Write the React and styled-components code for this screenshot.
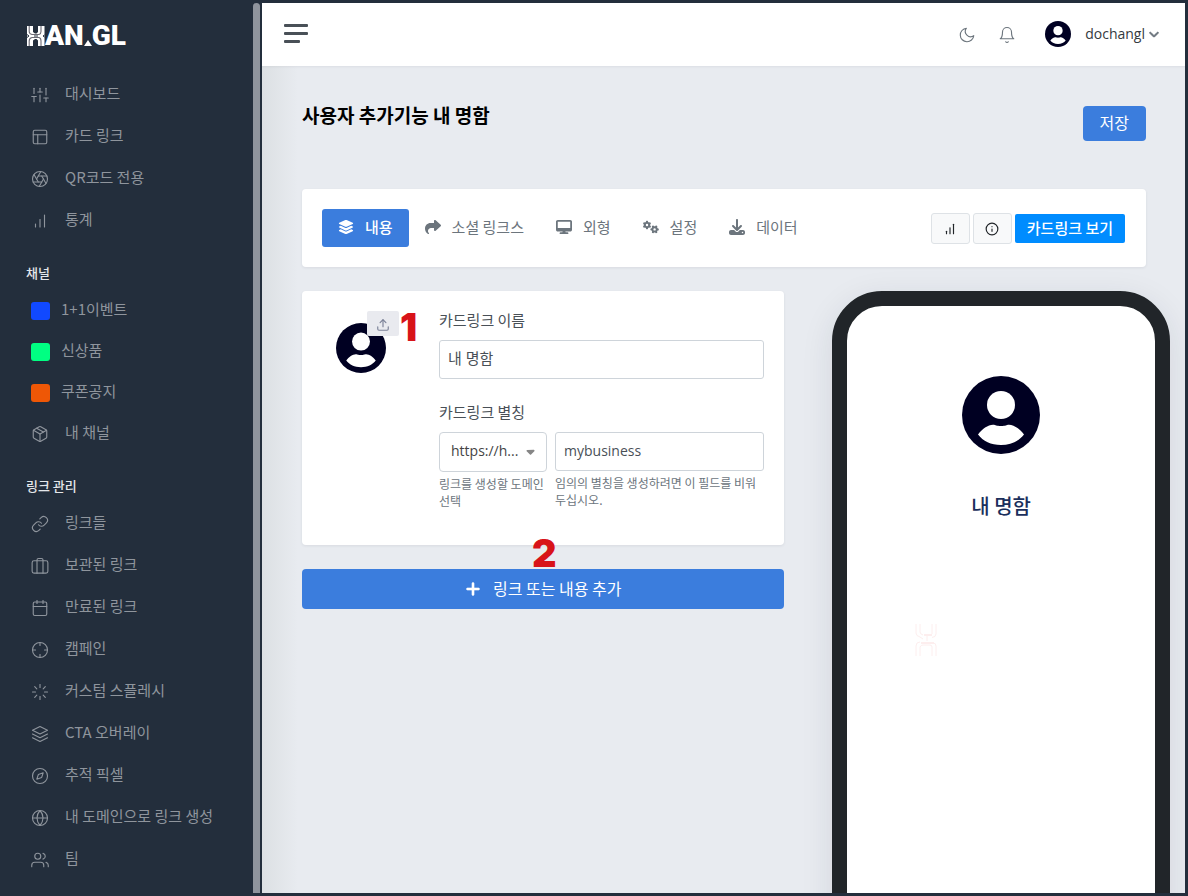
import { useState } from "react";
import styled, { createGlobalStyle } from "styled-components";
import {
    FiSliders, FiLayout, FiAperture, FiBarChart, FiPackage, FiLink, FiCalendar,
    FiCrosshair, FiLoader, FiLayers, FiCompass, FiGlobe, FiUsers, FiMoon, FiBell,
    FiInfo, FiUpload,
} from "react-icons/fi";
import {
    FaLayerGroup, FaShare, FaDesktop, FaGears, FaDownload, FaPlus, FaChevronDown, FaCaretDown,
} from "react-icons/fa6";

const GlobalStyle = createGlobalStyle`
    * {
        box-sizing : border-box;
    }
    body {
        margin : 0;
        background-color : #232e3c;
        color : #495057;
        font-family : "Noto Sans CJK KR", "Noto Sans", sans-serif;
        font-size : 15px;
    }
    button, input, select {
        font-family : inherit;
        font-size : 15px;
    }
    button {
        cursor : pointer;
    }
    h1, h2, h3, p, ul {
        margin : 0;
        padding : 0;
    }
    a {
        text-decoration : none;
    }
`;

const Frame = styled.div`
    display : flex;
    height : 100vh;
    padding : 3px 3px 3px 0;
    background-color : #232e3c;
`;

/* 사이드바 */
const Sidebar = styled.aside`
    display : flex;
    flex : none;
    width : 262px;
`;

const SidebarBody = styled.div`
    flex : 1;
    min-width : 0;
    overflow : hidden;
`;

const ScrollThumb = styled.div`
    width : 7px;
    margin-right : 2px;
    border-radius : 4px 4px 0 0;
    background-color : #8f949d;
`;

const Logo = styled.a`
    display : flex;
    align-items : center;
    height : 20px;
    margin : 23px 0 27px 27px;
    color : white;
    font-family : Roboto, "Liberation Sans", sans-serif;
    font-size : 28px;
    font-weight : 900;
    line-height : 20px;
`;

const LogoDot = styled.span`
    align-self : flex-end;
    border : 4px solid transparent;
    border-top : 0;
    border-bottom : 6px solid white;
`;

const NavTitle = styled.h2`
    padding : 22px 0 6px 26px;
    color : #e4e7ea;
    font-size : 13px;
    font-weight : 500;
    line-height : 20px;
`;

const NavList = styled.ul`
    list-style : none;
`;

const NavLink = styled.a`
    display : flex;
    align-items : center;
    gap : ${(props) => (props.$tag ? "11px" : "16px")};
    height : ${(props) => (props.$tag ? "41px" : "42px")};
    padding : 0 0 2px 31px;
    color : #8f959d;
    line-height : 20px;

    svg {
        width : 18px;
        height : 18px;
        margin-top : 3px;
        stroke-width : 1.5;
    }
`;

const Swatch = styled.span`
    width : 19px;
    height : 18px;
    margin-top : 5px;
    border-radius : 3px;
    background-color : ${(props) => props.$color};
`;

/* 본문 */
const Main = styled.main`
    flex : 1;
    min-width : 0;
    overflow-y : auto;
    scrollbar-width : none;
    background : linear-gradient(90deg, #dce0e3, #e8ebf0 36px);
`;

const TopBar = styled.header`
    display : flex;
    align-items : center;
    justify-content : space-between;
    height : 63px;
    padding : 0 26px 2px 22px;
    background-color : white;
    box-shadow : 0 1px 2px rgba(30,40,50,0.06);
`;

const MenuButton = styled.button`
    display : flex;
    flex-direction : column;
    gap : 5px;
    padding : 0;
    border : 0;
    background : none;
`;

const MenuBar = styled.span`
    width : ${(props) => (props.$short ? "16px" : "24px")};
    height : 3px;
    border-radius : 1px;
    background-color : #495057;
`;

const TopActions = styled.div`
    display : flex;
    align-items : center;
`;

const PlainButton = styled.button`
    display : flex;
    margin-right : 22px;
    padding : 0;
    border : 0;
    background : none;
    color : #6c757d;

    svg {
        width : 18px;
        height : 18px;
        margin-top : 2px;
        stroke-width : 1.5;
    }
`;

const UserButton = styled.button`
    display : flex;
    align-items : center;
    margin-left : 7px;
    padding : 0;
    border : 0;
    background : none;
    color : #343a40;
    font-family : "Open Sans", sans-serif;
    font-size : 14px;

    span {
        margin : 0 4px 0 14px;
    }
    > svg:last-child {
        width : 10px;
        height : 10px;
        color : #6c757d;
        stroke : currentColor;
        stroke-width : 50;
    }
`;

const Content = styled.div`
    padding : 39px 39px 0 40px;
`;

const PageHead = styled.div`
    display : flex;
    align-items : flex-start;
    justify-content : space-between;
    margin-bottom : 48px;
`;

const PageTitle = styled.h1`
    color : black;
    font-size : 19px;
    font-weight : 700;
    line-height : 20px;
`;

const PrimaryButton = styled.button`
    display : flex;
    align-items : center;
    justify-content : center;
    gap : 12px;
    width : ${(props) => (props.$wide ? "100%" : "auto")};
    height : ${(props) => (props.$wide ? "40px" : "35px")};
    margin-top : ${(props) => (props.$wide ? "24px" : "1px")};
    padding : 0 17px 3px;
    border : 0;
    border-radius : 4px;
    background-color : #3b7ddd;
    color : white;
    font-size : 16px;
    line-height : 24px;

    svg {
        margin-top : 2px;
        stroke : currentColor;
        stroke-width : 20;
    }
`;

const Card = styled.section`
    border-radius : 4px;
    background-color : white;
    box-shadow : 0 1px 3px rgba(30,40,50,0.08);
`;

const Toolbar = styled(Card)`
    display : flex;
    align-items : center;
    justify-content : space-between;
    margin-bottom : 24px;
    padding : 20px 21px 20px 20px;
`;

const Tabs = styled.nav`
    display : flex;
`;

const Tab = styled.button`
    display : flex;
    align-items : center;
    gap : 11px;
    height : 38px;
    padding : 0 16px 3px;
    border : 0;
    border-radius : 3px;
    background-color : ${(props) => (props.$active ? "#3b7ddd" : "transparent")};
    color : ${(props) => (props.$active ? "white" : "#6c757d")};
    font-weight : ${(props) => (props.$active ? 500 : 400)};

    svg {
        width : 16px;
        height : 16px;
    }
`;

const ToolbarActions = styled.div`
    display : flex;
    align-items : center;
    gap : 3px;
`;

const IconButton = styled.button`
    display : flex;
    align-items : center;
    justify-content : center;
    width : 39px;
    height : 31px;
    padding : 2px 0 0;
    border : 1px solid #dee2e6;
    border-radius : 3px;
    background-color : #f8f9fa;
    color : #212529;

    svg {
        width : 14px;
        height : 14px;
        stroke-width : 2;
    }
`;

const ViewLink = styled.a`
    padding : 0 12px 2px;
    border-radius : 2px;
    background-color : #008cff;
    color : white;
    font-weight : 500;
    line-height : 27px;
`;

const Columns = styled.div`
    display : grid;
    grid-template-columns : minmax(0, 7fr) minmax(0, 5fr);
    margin : 0 -12px;
`;

const Column = styled.div`
    padding : 0 12px;
`;

const ProfileCard = styled(Card)`
    display : grid;
    grid-template-columns : 93px minmax(0, 1fr);
    gap : 24px;
    padding : 20px 20px 36px;
`;

const Picture = styled.div`
    position : relative;
    align-self : start;
    padding : 12px 0 0 14px;
`;

const UploadButton = styled.button`
    position : absolute;
    top : 0;
    left : 45px;
    display : flex;
    align-items : center;
    justify-content : center;
    width : 32px;
    height : 25px;
    padding : 2px 0 0;
    border : 0;
    border-radius : 2px;
    background-color : #e9eaef;
    color : #7d8399;

    svg {
        width : 14px;
        height : 14px;
        stroke-width : 2;
    }
`;

const Marker = styled.span`
    position : absolute;
    top : ${(props) => props.$top};
    left : ${(props) => props.$left};
    color : #d81319;
    font-family : Inter, sans-serif;
    font-size : 38px;
    font-weight : 900;
    line-height : 28px;
`;

const Field = styled.div`
    margin-bottom : 24px;

    &:last-child {
        margin-bottom : 0;
    }
`;

const Label = styled.label`
    display : block;
    margin-bottom : 12px;
    line-height : 17px;
`;

const Input = styled.input`
    display : block;
    width : 100%;
    height : 39px;
    padding : ${(props) => (props.$latin ? "0 8px 2px" : "0 8px 4px")};
    border : 1px solid #ced4da;
    border-radius : 3px;
    background-color : white;
    color : #495057;
    font-family : "Open Sans", "Noto Sans CJK KR", sans-serif;
    font-size : ${(props) => (props.$latin ? "14px" : "15px")};
`;

const AliasRow = styled.div`
    display : grid;
    grid-template-columns : 108px minmax(0, 1fr);
    gap : 8px;
`;

const SelectWrap = styled.div`
    position : relative;

    svg {
        position : absolute;
        top : 13px;
        right : 10px;
        width : 13px;
        height : 13px;
        color : #868686;
        pointer-events : none;
    }
`;

const Select = styled.select`
    display : block;
    width : 100%;
    height : 40px;
    padding : 0 20px 3px 11px;
    border : 1px solid #ced4da;
    border-radius : 4px;
    background-color : white;
    color : #444444;
    appearance : none;
    font-family : "Open Sans", sans-serif;
    font-size : 14px;
`;

const Help = styled.p`
    margin-top : 3px;
    color : #6c757d;
    font-size : 12px;
    line-height : 17px;
`;

const AddArea = styled.div`
    position : relative;
`;

/* 휴대폰 미리보기 */
const Phone = styled.div`
    height : 700px;
    margin : 0 -24px -100px 24px;
    padding-top : 70px;
    border : 15px solid #212529;
    border-radius : 50px;
    background-color : white;
    box-shadow : 0 8px 32px rgba(30,40,60,0.1);
    text-align : center;
`;

const PhoneName = styled.h3`
    margin : 34px 0 104px;
    color : #1b2f5c;
    font-size : 20px;
    font-weight : 500;
    line-height : 28px;
`;

const Watermark = styled.div`
    display : flex;
    padding-left : 68px;
    color : #fdeeee;
`;

const Avatar = ({ size }) => (
    <svg width={size} height={size} viewBox="0 0 78 78" aria-hidden="true">
        <circle cx="39" cy="39" r="39" fill="#000022" />
        <circle cx="39" cy="29" r="14" fill="white" />
        <path
            fill="white"
            d="M16 58.5C20 53 26 48.7 31 48.7C34 48.7 34 50 39 50C44 50 44 48.7 47 48.7C52 48.7 58 53 62 58.5C57 65 49 69 39 69C29 69 21 65 16 58.5Z"
        />
    </svg>
);

// 로고 심볼
const LogoMark = () => (
    <svg width="18" height="20" viewBox="0 0 18 20" fill="none" aria-hidden="true">
        <path fill="white" d="M0 0H6V6L8 7.500H9.500L11 6V0H17.500V20H11V14.500L9.500 13H8L6 14.500V20H0Z" />
        <path stroke="#6b6a74" strokeWidth="1.100" d="M2.200 0V5.500Q2.200 8 5 8.500H12Q14 8 14 5.500V0M2.200 20V15Q2.200 12 5 11.500H12Q14 12 14 15V20" />
        <path stroke="#232e3c" strokeWidth="1" d="M0 8.500L2 10L0 11.500M17.500 9L16 10L17.500 11M7 10H11" />
    </svg>
);

const OutlineMark = () => (
    <svg width="24" height="32" viewBox="0 0 24 32" fill="none" stroke="currentColor" aria-hidden="true">
        <path d="M1 0V9Q1 12 5 13L8 15M5 0V8Q5 10 8 11M17 0V10M21 0V10Q21 13 17 13.500M12 12V17" />
        <path strokeWidth="2" d="M9 11H17M6 19H19" />
        <path d="M1 32V22Q1 18 5 18M5 32V23Q6 21 8 21H15Q17 21 17 23V32M21 32V22Q21 19 18 19" />
    </svg>
);

const Suitcase = () => (
    <svg viewBox="0 0 24 24" fill="none" stroke="currentColor" strokeLinecap="round" aria-hidden="true">
        <rect x="1.500" y="5" width="21" height="16.500" rx="2.500" />
        <path d="M8 21.500V4Q8 2 10 2H14Q16 2 16 4V21.500" />
    </svg>
);

const mainLinks = [
    { name : "대시보드", Icon : FiSliders },
    { name : "카드 링크", Icon : FiLayout },
    { name : "QR코드 전용", Icon : FiAperture },
    { name : "통계", Icon : FiBarChart },
];

const channels = [
    { name : "1+1이벤트", color : "#1149ff" },
    { name : "신상품", color : "#00ff82" },
    { name : "쿠폰공지", color : "#ee5706" },
];

const manageLinks = [
    { name : "링크들", Icon : FiLink },
    { name : "보관된 링크", Icon : Suitcase },
    { name : "만료된 링크", Icon : FiCalendar },
    { name : "캠페인", Icon : FiCrosshair },
    { name : "커스텀 스플레시", Icon : FiLoader },
    { name : "CTA 오버레이", Icon : FiLayers },
    { name : "추적 픽셀", Icon : FiCompass },
    { name : "내 도메인으로 링크 생성", Icon : FiGlobe },
    { name : "팀", Icon : FiUsers },
];

const tabs = [
    { name : "내용", Icon : FaLayerGroup },
    { name : "소셜 링크스", Icon : FaShare },
    { name : "외형", Icon : FaDesktop },
    { name : "설정", Icon : FaGears },
    { name : "데이터", Icon : FaDownload },
];

const NavItem = ({ name, Icon }) => (
    <li>
        <NavLink href="#"><Icon />{name}</NavLink>
    </li>
);

const App = () => {
    const [tab, setTab] = useState("내용");
    const [name, setName] = useState("내 명함");
    const [alias, setAlias] = useState("mybusiness");

    return (
        <>
            <GlobalStyle />
            <Frame>
                <Sidebar>
                    <SidebarBody>
                        <Logo href="#" aria-label="HAN.GL">
                            <LogoMark />AN<LogoDot />GL
                        </Logo>
                        <nav>
                            <NavList>
                                {mainLinks.map((link) => <NavItem key={link.name} {...link} />)}
                            </NavList>
                            <NavTitle>채널</NavTitle>
                            <NavList>
                                {channels.map((channel) => (
                                    <li key={channel.name}>
                                        <NavLink href="#" $tag>
                                            <Swatch $color={channel.color} />{channel.name}
                                        </NavLink>
                                    </li>
                                ))}
                                <NavItem name="내 채널" Icon={FiPackage} />
                            </NavList>
                            <NavTitle>링크 관리</NavTitle>
                            <NavList>
                                {manageLinks.map((link) => <NavItem key={link.name} {...link} />)}
                            </NavList>
                        </nav>
                    </SidebarBody>
                    <ScrollThumb />
                </Sidebar>
                <Main>
                    <TopBar>
                        <MenuButton aria-label="메뉴">
                            <MenuBar />
                            <MenuBar />
                            <MenuBar $short />
                        </MenuButton>
                        <TopActions>
                            <PlainButton aria-label="다크 모드"><FiMoon /></PlainButton>
                            <PlainButton aria-label="알림"><FiBell /></PlainButton>
                            <UserButton>
                                <Avatar size={26} />
                                <span>dochangl</span>
                                <FaChevronDown />
                            </UserButton>
                        </TopActions>
                    </TopBar>
                    <Content>
                        <PageHead>
                            <PageTitle>사용자 추가기능 내 명함</PageTitle>
                            <PrimaryButton>저장</PrimaryButton>
                        </PageHead>
                        <Toolbar>
                            <Tabs>
                                {tabs.map(({ name : tabName, Icon }) => (
                                    <Tab key={tabName} $active={tab === tabName} onClick={() => setTab(tabName)}>
                                        <Icon />{tabName}
                                    </Tab>
                                ))}
                            </Tabs>
                            <ToolbarActions>
                                <IconButton aria-label="통계"><FiBarChart /></IconButton>
                                <IconButton aria-label="정보"><FiInfo /></IconButton>
                                <ViewLink href="#">카드링크 보기</ViewLink>
                            </ToolbarActions>
                        </Toolbar>
                        <Columns>
                            <Column>
                                <ProfileCard>
                                    <Picture>
                                        <Avatar size={50} />
                                        <UploadButton aria-label="사진 올리기"><FiUpload /></UploadButton>
                                        <Marker $top="2px" $left="78px">1</Marker>
                                    </Picture>
                                    <div>
                                        <Field>
                                            <Label htmlFor="name">카드링크 이름</Label>
                                            <Input id="name" value={name} onChange={(e) => setName(e.target.value)} />
                                        </Field>
                                        <Field>
                                            <Label htmlFor="alias">카드링크 별칭</Label>
                                            <AliasRow>
                                                <div>
                                                    <SelectWrap>
                                                        <Select aria-label="도메인">
                                                            <option>https://h...</option>
                                                        </Select>
                                                        <FaCaretDown />
                                                    </SelectWrap>
                                                    <Help>링크를 생성할 도메인 선택</Help>
                                                </div>
                                                <div>
                                                    <Input $latin id="alias" value={alias} onChange={(e) => setAlias(e.target.value)} />
                                                    <Help>임의의 별칭을 생성하려면 이 필드를 비워 두십시오.</Help>
                                                </div>
                                            </AliasRow>
                                        </Field>
                                    </div>
                                </ProfileCard>
                                <AddArea>
                                    <PrimaryButton $wide><FaPlus />링크 또는 내용 추가</PrimaryButton>
                                    <Marker $top="-30px" $left="230px">2</Marker>
                                </AddArea>
                            </Column>
                            <Column>
                                <Phone>
                                    <Avatar size={78} />
                                    <PhoneName>{name}</PhoneName>
                                    <Watermark><OutlineMark /></Watermark>
                                </Phone>
                            </Column>
                        </Columns>
                    </Content>
                </Main>
            </Frame>
        </>
    );
};

export default App;
